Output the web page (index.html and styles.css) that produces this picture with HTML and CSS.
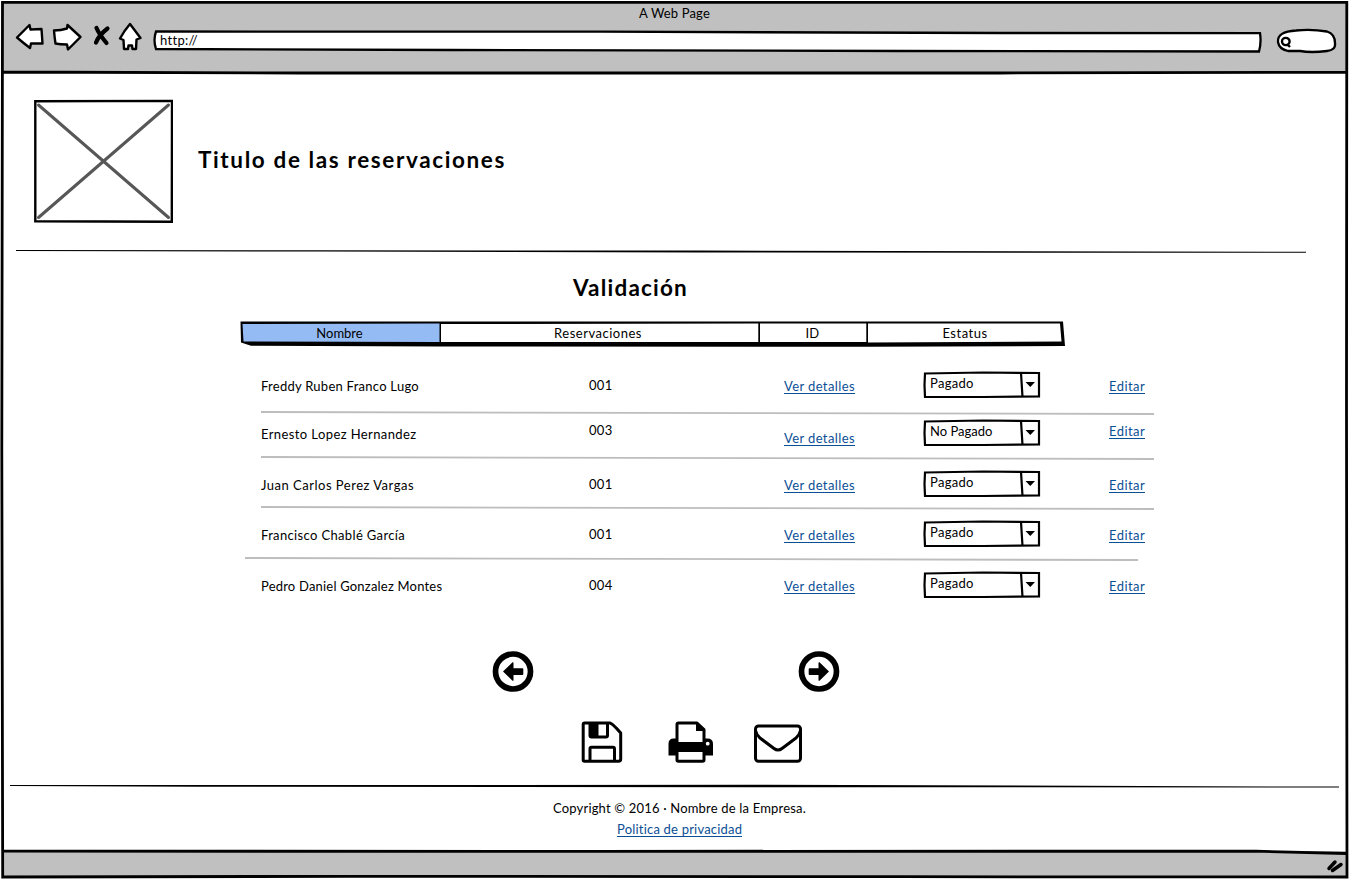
FILE: index.html
```html
<!DOCTYPE html>
<html lang="es">
<head>
<meta charset="utf-8">
<title>A Web Page</title>
<link rel="stylesheet" href="styles.css">
</head>
<body>
<div class="window">
  <header class="chrome">
    <div class="chrome-title"><span>A Web Page</span></div>
    <div class="toolbar">
      <svg class="nav" width="130" height="32" viewBox="14 21 130 32">
        <g fill="#fff" stroke="#000" stroke-width="2.4" stroke-linejoin="round" stroke-linecap="round">
          <path d="M17 37.500L29.500 25L30.500 29.500L41.500 29L42.500 43.500L31 43.500L30 48Q24 43.500 17 37.500Z"/>
          <path d="M54 30.500Q61 30.500 67 28.500L67.500 25L80.500 37L68 49.500L67 44.500Q60 44.500 55.500 43.500Q54.500 37 54 30.500Z"/>
          <path d="M130 24L140.500 38L136.500 39.500L136 49L132.500 49L132 45.500L128.500 45.500L128 49L124 49L123.500 40L120 38.500Q124 31 130 24Z"/>
        </g>
        <path d="M96.500 28Q99 34 106.500 43M107.500 28.500Q99 35 96 42.500" fill="none" stroke="#000" stroke-width="4.200" stroke-linecap="round"/>
      </svg>
      <div class="url">
        <svg class="sketch" width="1110" height="24" viewBox="152 29 1110 24"><path d="M156 31.500L600 31.700L1000 33L1260 33.200Q1261.500 42 1259 51.500L900 51L450 50L156 49Q153 40 156 31.500Z" fill="#fff" stroke="#000" stroke-width="2.300"/></svg>
        <span>http://</span>
      </div>
      <svg class="search" width="62" height="28" viewBox="1275 27 62 28">
        <path d="M1278 42Q1277 31.500 1296 30.500Q1312 29 1327 31.500Q1335 34 1335 43Q1336 50 1327 51Q1311 53 1300 51L1288 51Q1279 49 1278 42Z" fill="#fff" stroke="#000" stroke-width="2.300"/>
        <path d="M1282 41.500a3.800 3.600 0 1 1 7.600 0a3.800 3.600 0 1 1 -7.600 0M1287 44L1290 47" fill="none" stroke="#000" stroke-width="2.400"/>
      </svg>
    </div>
  </header>

  <main class="page">
    <section class="brand">
      <svg width="140" height="124" viewBox="33 99 140 124">
        <path d="M38.500 105L168.500 217.500M168.500 105L38.500 217.500" stroke="#575757" stroke-width="3" stroke-linecap="round"/>
        <path d="M35.300 101.200L172 100.900L171.800 221.700L35.300 221.200Z" fill="none" stroke="#000" stroke-width="2.400"/>
      </svg>
      <h1>Titulo de las reservaciones</h1>
    </section>
    <svg class="rule-top" width="1290" height="4" viewBox="16 249 1290 4"><path d="M16 250L320 250.300L700 250.500L1306 251.800L1306 252.800L700 252.500L320 251.600L16 250.900Z"/></svg>

    <h2>Validación</h2>

    <div class="thead">
      <svg class="sketch" width="826" height="28" viewBox="240 320 826 28">
        <path d="M240.500 321.500L1063 321.500L1065 346L867 346.700L440 346.500L251 345.700L241 342.500Z"/>
        <path d="M242.500 324L439.500 323.500V342L243.500 341.500Z" fill="#94bbf3"/>
        <path d="M441 324L758.300 323.500V342H441ZM760 323.500H866.300V342H760ZM868 323.500L1060 323.500L1061.500 341.500L868 342.500Z" fill="#fff"/>
      </svg>
      <span class="tight">Nombre</span><span class="wide">Reservaciones</span><span>ID</span><span class="wide estatus">Estatus</span>
    </div>

    <div class="rows">
      <div class="row first">
        <div class="cells"><span class="name n1">Freddy Ruben Franco Lugo</span><span class="num">001</span><a class="ver">Ver detalles</a>
          <div class="select"><svg class="sketch" width="118" height="28"><path d="M2 2.500L60 1.500L116 2L116 25.500L60 26L2 26L1.500 14ZM98 2L99.500 26" fill="none" stroke="#000" stroke-width="2.200"/><path d="M102.500 11h9.500l-4.700 5z"/></svg><span>Pagado</span></div>
          <a class="edit">Editar</a></div>
        <svg class="sep" width="893" height="4"><path d="M0 1L893 3" stroke="#bdbdbd" stroke-width="1.800"/></svg>
      </div>
      <div class="row second">
        <div class="cells"><span class="name n2">Ernesto Lopez Hernandez</span><span class="num">003</span><a class="ver">Ver detalles</a>
          <div class="select"><svg class="sketch" width="118" height="28"><path d="M2 2.500L60 1.500L116 2L116 25.500L60 26L2 26L1.500 14ZM98 2L99.500 26" fill="none" stroke="#000" stroke-width="2.200"/><path d="M102.500 11h9.500l-4.700 5z"/></svg><span class="tight">No Pagado</span></div>
          <a class="edit">Editar</a></div>
        <svg class="sep" width="893" height="4"><path d="M0 1L893 3" stroke="#bdbdbd" stroke-width="1.800"/></svg>
      </div>
      <div class="row third">
        <div class="cells"><span class="name n3">Juan Carlos Perez Vargas</span><span class="num">001</span><a class="ver">Ver detalles</a>
          <div class="select"><svg class="sketch" width="118" height="28"><path d="M2 2.500L60 1.500L116 2L116 25.500L60 26L2 26L1.500 14ZM98 2L99.500 26" fill="none" stroke="#000" stroke-width="2.200"/><path d="M102.500 11h9.500l-4.700 5z"/></svg><span>Pagado</span></div>
          <a class="edit">Editar</a></div>
        <svg class="sep" width="893" height="4"><path d="M0 1L893 3" stroke="#bdbdbd" stroke-width="1.800"/></svg>
      </div>
      <div class="row fourth">
        <div class="cells"><span class="name n4">Francisco Chablé García</span><span class="num">001</span><a class="ver">Ver detalles</a>
          <div class="select"><svg class="sketch" width="118" height="28"><path d="M2 2.500L60 1.500L116 2L116 25.500L60 26L2 26L1.500 14ZM98 2L99.500 26" fill="none" stroke="#000" stroke-width="2.200"/><path d="M102.500 11h9.500l-4.700 5z"/></svg><span>Pagado</span></div>
          <a class="edit">Editar</a></div>
        <svg class="sep" width="893" height="4"><path d="M0 1L893 3" stroke="#bdbdbd" stroke-width="1.800"/></svg>
      </div>
      <div class="row fifth">
        <div class="cells"><span class="name n5">Pedro Daniel Gonzalez Montes</span><span class="num">004</span><a class="ver">Ver detalles</a>
          <div class="select"><svg class="sketch" width="118" height="28"><path d="M2 2.500L60 1.500L116 2L116 25.500L60 26L2 26L1.500 14ZM98 2L99.500 26" fill="none" stroke="#000" stroke-width="2.200"/><path d="M102.500 11h9.500l-4.700 5z"/></svg><span>Pagado</span></div>
          <a class="edit">Editar</a></div>
      </div>
    </div>

    <nav class="pager">
      <svg width="42" height="42" viewBox="492 650 42 42"><circle cx="513" cy="671.500" r="17.500" fill="none" stroke="#000" stroke-width="5.700"/><path d="M503 671.500L512.500 662.300Q513.500 662 513.500 663V668.200H522.500Q523.300 668.200 523.300 669V674Q523.300 675 522.500 675H513.500V680.500Q513.300 681 512.500 680.700Z"/></svg>
      <svg width="42" height="42" viewBox="492 650 42 42"><circle cx="513" cy="671.500" r="17.500" fill="none" stroke="#000" stroke-width="5.700"/><path transform="matrix(-1 0 0 1 1026 0)" d="M503 671.500L512.500 662.300Q513.500 662 513.500 663V668.200H522.500Q523.300 668.200 523.300 669V674Q523.300 675 522.500 675H513.500V680.500Q513.300 681 512.500 680.700Z"/></svg>
    </nav>

    <div class="actions">
      <svg width="42" height="42" viewBox="581 721 42 42"><g fill="none" stroke="#000" stroke-width="3" stroke-linejoin="round"><path d="M584.500 723H610Q612.500 723.500 620.700 733V759Q620.700 761.300 618.500 761.300H584.500Q583.200 761.300 583.200 760V724.500Q583.200 723 584.500 723Z"/><path d="M590 723V735.500Q590 737 591.500 737H606Q607.500 737 607.500 735.500V723M590 761V749Q590 747.300 591.500 747.300H613Q614.500 747.300 614.500 749V761"/></g><path d="M590 723h8.500v14h-8.500z"/></svg>
      <svg width="46" height="42" viewBox="668.500 721 46 42"><path d="M677.500 745V724.500Q677.500 723 679 723H697.500L704.500 729.500V745M677.500 752V760Q677.500 761.300 679 761.300H703Q704.500 761.300 704.500 760V752" fill="none" stroke="#000" stroke-width="3" stroke-linejoin="round"/><path d="M696.500 723V731H704.500V729L698.500 723ZM677 738.500V742H705V738.500H708Q713.500 738.500 713.500 744V755.500H704.500V752H677.500V755.500H669V744Q669 738.500 674 738.500Z"/><circle cx="708.200" cy="743.700" r="1.900" fill="#fff"/></svg>
      <svg width="48" height="40" viewBox="754 723 48 40"><g fill="none" stroke="#000" stroke-width="3" stroke-linejoin="round"><rect x="755.500" y="726" width="45" height="35.300" rx="3"/><path d="M755.500 730.500Q756.500 735 760 738L774 748.500Q778 751.500 782 748.500L796 738Q799.500 735 800.500 730.500"/></g></svg>
    </div>

    <svg class="rule-bottom" width="1329" height="4" viewBox="10 784 1329 4"><path d="M10 785L400 785L760 784.800L1339 786.600L1339 787.500L760 787.200L200 786.700L10 785.900Z"/></svg>
    <p class="copy">Copyright © 2016 · Nombre de la Empresa.</p>
    <a class="privacy">Politica de privacidad</a>
  </main>

  <footer class="status">
    <svg width="20" height="18" viewBox="1325 858 20 18"><path d="M1329 868.500L1335 862M1332.500 870.500L1341 864.500" stroke="#000" stroke-width="3.500" stroke-linecap="round"/></svg>
  </footer>
  <svg class="frame" width="1349" height="879" viewBox="0 0 1349 879">
    <path d="M0 0H1349V879H0ZM2.500 2.300L1 450L2.700 877.300L350 876L900 876.700L1347 877L1346.500 400L1346.800 2.300Z" fill="#fff" fill-rule="evenodd"/>
    <path d="M2.500 2.300L1.800 450L2.700 877L350 876.300L900 876.700L1347 877L1346.500 400L1346.800 2.300ZM2 72L300 73L1000 73L1347 72.300" fill="none" stroke="#000" stroke-width="2.800"/>
    <path d="M3 851.200L600 851.300L1256 851.200L1346 853.500" fill="none" stroke="#000" stroke-width="2.800"/>
  </svg>
</div>
</body>
</html>
```
FILE: styles.css
```css
* { box-sizing: border-box; }
body {
  margin: 0;
  background: #fff;
  color: #000;
  font: 13px/16px Lato, "Open Sans", sans-serif;
  letter-spacing: .3px;
}
svg { display: block; flex: none; }
.window { position: relative; width: 1349px; height: 879px; display: flex; flex-direction: column; overflow: hidden; }
.frame { position: absolute; inset: 0; pointer-events: none; }
.sketch { position: absolute; left: 0; top: 0; }

.chrome { height: 73px; background: #c0c0c0; padding-top: 5px; }
.chrome-title { height: 16px; text-align: center; letter-spacing: .15px; }
.toolbar { display: flex; padding-left: 14px; }
.url { position: relative; width: 1110px; height: 24px; margin: 8px 0 0 8px; padding: 3px 0 0 8px; }
.url span { position: relative; display: block; }
.search { margin: 6px 0 0 13px; }

.page { flex: 1; display: flex; flex-direction: column; align-items: flex-start; background: #fff; }
.brand { display: flex; align-items: center; gap: 25px; padding: 26px 0 0 33px; }
h1, h2 { margin: 0; font-size: 22.500px; line-height: 28px; font-weight: 700; }
h1 { letter-spacing: 1.620px; margin-top: -2px; }
.rule-top { margin: 26px 0 0 16px; }
h2 { margin: 21px 0 0 573px; letter-spacing: 1.200px; }

.thead {
  position: relative;
  display: grid;
  grid-template-columns: 199px 320px 107px 200px;
  width: 826px;
  height: 28px;
  margin: 18px 0 0 240px;
  padding-top: 5px;
  text-align: center;
}
.thead span { position: relative; }
.tight { letter-spacing: 0; }
.wide { letter-spacing: .5px; }
.thead .wide { padding-right: 2px; }

.rows { width: 893px; margin: 15px 0 0 261px; }
.row { display: flex; flex-direction: column; height: 51px; }
.second { height: 45px; }
.third { height: 50px; }
.sep { margin-bottom: -1px; }
.cells { flex: 1; min-height: 0; display: grid; grid-template-columns: 328px 195px 139px 186px 45px; align-items: start; }
.name, .ver, .edit { margin-top: 18px; white-space: nowrap; }
.num { margin-top: 17px; }
.select { position: relative; width: 118px; height: 28px; margin-top: 11px; padding: 4px 0 0 7px; }
.first .name, .first .ver, .first .edit { margin-top: 15px; }
.first .num { margin-top: 14px; }
.first .select { margin-top: 8px; }
.second .name { margin-top: 12px; }
.second .num { margin-top: 8px; }
.second .ver { margin-top: 16px; }
.second .select { margin-top: 5px; }
.second .edit { margin-top: 9px; }
.fourth .sep { margin-left: -16px; }
.n1 { letter-spacing: .260px; }
.n2 { letter-spacing: .400px; }
.n3 { letter-spacing: .500px; }
.n4 { letter-spacing: .350px; }
.n5 { letter-spacing: .200px; }
.ver { letter-spacing: .380px; }
.edit { letter-spacing: .450px; }

a { color: #0b4f96; justify-self: start; height: 16px; border-bottom: 1px solid #0b4f96; }

.pager { display: flex; gap: 264px; margin: 39px 0 0 492px; }
.actions { display: flex; align-items: flex-end; margin: 29px 0 0 581px; }
.actions svg + svg { margin-left: 45px; }
.actions svg:last-child { margin-left: 40px; }
.rule-bottom { margin: 21px 0 0 10px; }
.copy { margin: 12px 0 0 553px; white-space: nowrap; letter-spacing: .180px; }
.privacy { margin: 5px 0 0 617px; letter-spacing: .200px; }

.status { height: 28px; background: #c0c0c0; display: flex; justify-content: flex-end; padding: 7px 4px 0 0; }
```
